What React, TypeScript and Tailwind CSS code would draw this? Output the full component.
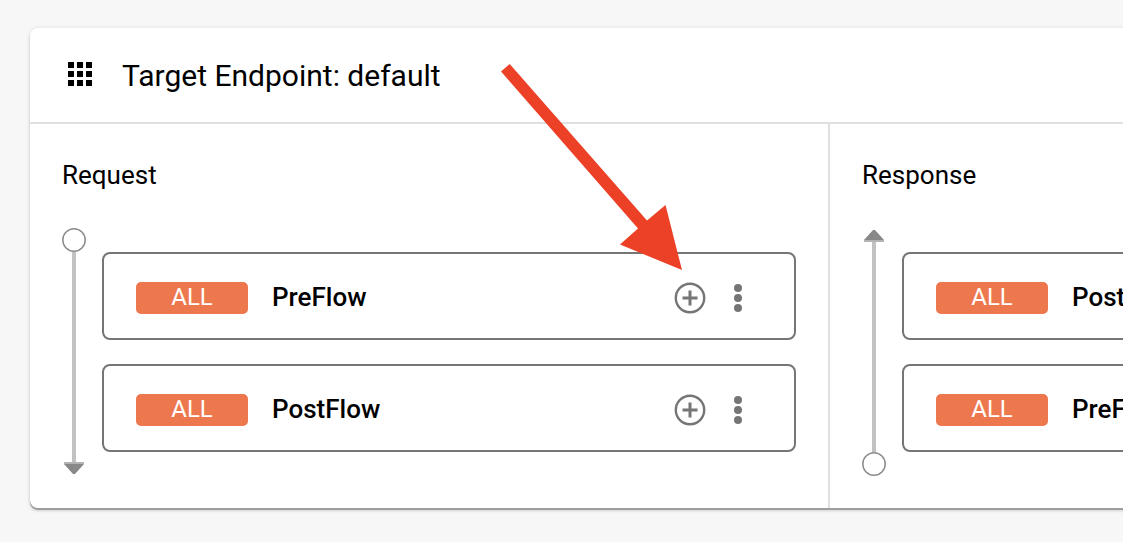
type Direction = "down" | "up";

interface PanelProps {
  title: string;
  direction: Direction;
  flows: string[];
}

function GripIcon() {
  const steps = [0, 9, 18];
  return (
    <svg width="26" height="26" viewBox="0 0 26 26" aria-hidden="true">
      {steps.map((y) =>
        steps.map((x) => <rect key={`${x}-${y}`} x={x} y={y} width="6" height="6" fill="#000" />),
      )}
    </svg>
  );
}

function AddIcon() {
  return (
    <svg width="32" height="32" viewBox="0 0 32 32" fill="none" stroke="#757575" aria-hidden="true">
      <circle cx="16" cy="16" r="14.2" strokeWidth="2.4" />
      <path d="M8.5 16h15M16 8.5v15" strokeWidth="3" />
    </svg>
  );
}

function MoreIcon() {
  return (
    <svg width="8" height="32" viewBox="0 0 8 32" fill="#757575" aria-hidden="true">
      <circle cx="4" cy="6" r="4" />
      <circle cx="4" cy="16" r="4" />
      <circle cx="4" cy="26" r="4" />
    </svg>
  );
}

function StartDot() {
  return (
    <svg width="24" height="24" viewBox="0 0 24 24" aria-hidden="true">
      <circle cx="12" cy="12" r="11.2" fill="#fff" stroke="#8c8c8c" strokeWidth="1.5" />
    </svg>
  );
}

function ArrowHead({ direction }: { direction: Direction }) {
  return (
    <svg width="20" height="12" viewBox="0 0 20 12" aria-hidden="true">
      {direction === "down" ? (
        <>
          <rect width="20" height="2" fill="#b4b4b4" />
          <path d="M0 2h20L11 12H9z" fill="#888" />
        </>
      ) : (
        <>
          <path d="M0 10h20L11 0H9z" fill="#888" />
          <rect y="10" width="20" height="2" fill="#b4b4b4" />
        </>
      )}
    </svg>
  );
}

function Timeline({ direction }: { direction: Direction }) {
  const order = direction === "down" ? "flex-col" : "flex-col-reverse";
  return (
    <div className={`flex w-6 items-center ${order}`}>
      <StartDot />
      <span className="w-1 grow bg-[#c2c2c2]" />
      <span className={direction === "down" ? "flex pb-0.5" : "flex pt-0.5"}>
        <ArrowHead direction={direction} />
      </span>
    </div>
  );
}

function FlowRow({ name }: { name: string }) {
  return (
    <li className="flex h-22 items-center rounded-lg border-2 border-[#757575] px-8 pt-1">
      <span className="flex h-8 w-28 items-center justify-center rounded-[5px] bg-[#ee784e] pb-0.5 text-[24px] leading-8 text-white">
        ALL
      </span>
      <span className="ml-6 grow pb-0.5 text-[26px] leading-8 font-medium">{name}</span>
      <button type="button" aria-label={`Add step to ${name}`} className="mr-7">
        <AddIcon />
      </button>
      <button type="button" aria-label={`More options for ${name}`} className="mr-5">
        <MoreIcon />
      </button>
    </li>
  );
}

function FlowPanel({ title, direction, flows }: PanelProps) {
  return (
    <section className="px-8 py-8">
      <h2 className="pb-0.5 text-[26px] leading-[38px]">{title}</h2>
      <div className="mt-8 flex gap-4">
        <Timeline direction={direction} />
        <ul className="flex grow flex-col gap-6 py-6">
          {flows.map((name) => (
            <FlowRow key={name} name={name} />
          ))}
        </ul>
      </div>
    </section>
  );
}

function PointerArrow() {
  return (
    <svg
      className="pointer-events-none absolute top-9 left-[470px]"
      width="184"
      height="208"
      viewBox="0 0 184 208"
      aria-hidden="true"
    >
      <path d="M1 7.5L9.7 0L147 156.5L165.500 141L182 206L120 180.500L138 164.500z" fill="#ec4126" />
    </svg>
  );
}

export default function App() {
  return (
    <main className="min-h-screen overflow-hidden bg-[#f7f7f7] pt-7 pb-8 pl-[30px] font-[Roboto,sans-serif] text-black">
      <article className="relative min-w-[1600px] rounded-lg bg-white shadow-[0_2px_0_#9e9e9e,0_3px_3px_rgba(0,0,0,0.15),0_0_4px_rgba(0,0,0,0.1)]">
        <header className="flex h-24 items-center gap-7 border-b-2 border-[#e0e0e0] pl-[38px]">
          <GripIcon />
          <h1 className="pt-0.5 text-[30px] leading-10">Target Endpoint: default</h1>
        </header>
        <div className="grid grid-cols-2 divide-x-2 divide-[#e0e0e0]">
          <FlowPanel title="Request" direction="down" flows={["PreFlow", "PostFlow"]} />
          <FlowPanel title="Response" direction="up" flows={["PostFlow", "PreFlow"]} />
        </div>
        <PointerArrow />
      </article>
    </main>
  );
}
